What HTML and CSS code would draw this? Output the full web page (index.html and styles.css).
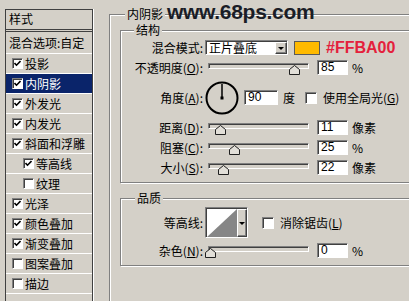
FILE: index.html
```html
<!DOCTYPE html>
<html lang="zh-CN">
<head>
<meta charset="UTF-8">
<title>图层样式 - 内阴影</title>
<link rel="stylesheet" href="styles.css">
</head>
<body>
<div class="watermark">www.68ps.com</div>

<div class="style-list">
	<div class="list-head">样式</div>
	<div class="list-item blend">混合选项:自定</div>
	<div class="list-item"><span class="check"><svg width="7" height="7" viewBox="0 0 7 7"><polyline points="0.5,3 2.5,5.2 6.5,1" fill="none" stroke="#000" stroke-width="1.6"/></svg></span>投影</div>
	<div class="list-item selected"><span class="check"><svg width="7" height="7" viewBox="0 0 7 7"><polyline points="0.5,3 2.5,5.2 6.5,1" fill="none" stroke="#000" stroke-width="1.6"/></svg></span>内阴影</div>
	<div class="list-item"><span class="check"><svg width="7" height="7" viewBox="0 0 7 7"><polyline points="0.5,3 2.5,5.2 6.5,1" fill="none" stroke="#000" stroke-width="1.6"/></svg></span>外发光</div>
	<div class="list-item"><span class="check"><svg width="7" height="7" viewBox="0 0 7 7"><polyline points="0.5,3 2.5,5.2 6.5,1" fill="none" stroke="#000" stroke-width="1.6"/></svg></span>内发光</div>
	<div class="list-item"><span class="check"><svg width="7" height="7" viewBox="0 0 7 7"><polyline points="0.5,3 2.5,5.2 6.5,1" fill="none" stroke="#000" stroke-width="1.6"/></svg></span>斜面和浮雕</div>
	<div class="list-item sub"><span class="check"><svg width="7" height="7" viewBox="0 0 7 7"><polyline points="0.5,3 2.5,5.2 6.5,1" fill="none" stroke="#000" stroke-width="1.6"/></svg></span>等高线</div>
	<div class="list-item sub"><span class="check"></span>纹理</div>
	<div class="list-item"><span class="check"><svg width="7" height="7" viewBox="0 0 7 7"><polyline points="0.5,3 2.5,5.2 6.5,1" fill="none" stroke="#000" stroke-width="1.6"/></svg></span>光泽</div>
	<div class="list-item"><span class="check"><svg width="7" height="7" viewBox="0 0 7 7"><polyline points="0.5,3 2.5,5.2 6.5,1" fill="none" stroke="#000" stroke-width="1.6"/></svg></span>颜色叠加</div>
	<div class="list-item"><span class="check"><svg width="7" height="7" viewBox="0 0 7 7"><polyline points="0.5,3 2.5,5.2 6.5,1" fill="none" stroke="#000" stroke-width="1.6"/></svg></span>渐变叠加</div>
	<div class="list-item"><span class="check"></span>图案叠加</div>
	<div class="list-item"><span class="check"></span>描边</div>
</div>

<fieldset class="group outer">
	<legend class="legend-main">内阴影</legend>

	<fieldset class="group inner">
		<legend class="legend-struct">结构</legend>
		<div class="rows">
			<div class="row">
				<span class="lbl">混合模式:</span>
				<div class="select">
					<span class="select-text">正片叠底</span>
					<span class="drop"><i class="arrow"></i></span>
				</div>
				<span class="swatch"></span>
				<span class="note">#FFBA00</span>
			</div>

			<div class="row">
				<span class="lbl">不透明度(<u>O</u>):</span>
				<div class="slider">
					<div class="track"></div>
					<span class="thumb" style="left: 84px"><svg width="11" height="10" viewBox="0 0 11 10"><polygon points="0.5,9.5 0.5,4.5 5.5,0.5 10.5,4.5 10.5,9.5" fill="#e2dfd8" stroke="#202020"/></svg></span>
				</div>
				<span class="num">85</span>
				<span class="unit">%</span>
			</div>

			<div class="row row-angle">
				<span class="lbl">角度(<u>A</u>):</span>
				<svg class="dial" width="34" height="34" viewBox="0 0 34 34">
					<circle cx="17" cy="17" r="15.5" fill="none" stroke="#000" stroke-width="2"/>
					<line x1="17" y1="17" x2="17" y2="3" stroke="#000" stroke-width="1.5"/>
					<rect x="15.5" y="15.5" width="3" height="3" fill="#000"/>
				</svg>
				<span class="num num-wide">90</span>
				<span class="deg">度</span>
				<span class="check big"></span>
				<span class="check-label">使用全局光(<u>G</u>)</span>
			</div>

			<div class="row">
				<span class="lbl">距离(<u>D</u>):</span>
				<div class="slider">
					<div class="track"></div>
					<span class="thumb" style="left: 10px"><svg width="11" height="10" viewBox="0 0 11 10"><polygon points="0.5,9.5 0.5,4.5 5.5,0.5 10.5,4.5 10.5,9.5" fill="#e2dfd8" stroke="#202020"/></svg></span>
				</div>
				<span class="num">11</span>
				<span class="unit">像素</span>
			</div>

			<div class="row">
				<span class="lbl">阻塞(<u>C</u>):</span>
				<div class="slider">
					<div class="track"></div>
					<span class="thumb" style="left: 24px"><svg width="11" height="10" viewBox="0 0 11 10"><polygon points="0.5,9.5 0.5,4.5 5.5,0.5 10.5,4.5 10.5,9.5" fill="#e2dfd8" stroke="#202020"/></svg></span>
				</div>
				<span class="num">25</span>
				<span class="unit">%</span>
			</div>

			<div class="row">
				<span class="lbl">大小(<u>S</u>):</span>
				<div class="slider">
					<div class="track"></div>
					<span class="thumb" style="left: 13px"><svg width="11" height="10" viewBox="0 0 11 10"><polygon points="0.5,9.5 0.5,4.5 5.5,0.5 10.5,4.5 10.5,9.5" fill="#e2dfd8" stroke="#202020"/></svg></span>
				</div>
				<span class="num">22</span>
				<span class="unit">像素</span>
			</div>
		</div>
	</fieldset>

	<fieldset class="group inner quality">
		<legend class="legend-quality">品质</legend>
		<div class="rows rows-quality">
			<div class="row row-contour">
				<span class="lbl">等高线:</span>
				<div class="contour">
					<svg class="contour-pic" width="31" height="29" viewBox="0 0 31 29" preserveAspectRatio="none">
						<rect width="31" height="29" fill="#fff"/>
						<polygon points="0,29 31,0 31,29" fill="#868686"/>
					</svg>
					<span class="drop contour-drop"><i class="arrow"></i></span>
				</div>
				<span class="check big antialias"></span>
				<span class="check-label">消除锯齿(<u>L</u>)</span>
			</div>

			<div class="row">
				<span class="lbl">杂色(<u>N</u>):</span>
				<div class="slider">
					<div class="track"></div>
					<span class="thumb" style="left: 0px"><svg width="11" height="10" viewBox="0 0 11 10"><polygon points="0.5,9.5 0.5,4.5 5.5,0.5 10.5,4.5 10.5,9.5" fill="#e2dfd8" stroke="#202020"/></svg></span>
				</div>
				<span class="num">0</span>
				<span class="unit">%</span>
			</div>
		</div>
	</fieldset>
</fieldset>
</body>
</html>
```

FILE: styles.css
```css
* {
	box-sizing: border-box;
}
body {
	margin: 0;
	width: 409px;
	height: 301px;
	overflow: hidden;
	position: relative;
	display: flex;
	align-items: flex-start;
	background: #d4d0c8;
	color: #000;
	font-family: "Noto Sans CJK SC", "Liberation Sans", sans-serif;
	font-size: 12px;
}
u {
	text-decoration-thickness: 1px;
	text-underline-offset: 1px;
}

/* watermark over the dialog */
.watermark {
	position: absolute;
	left: 167px;
	top: 0;
	z-index: 2;
	font-family: "Liberation Sans", Arial, sans-serif;
	font-weight: bold;
	font-size: 21px;
	line-height: 24px;
	letter-spacing: -0.3px;
	color: #1a1d26;
}

/* left list of styles */
.style-list {
	flex: none;
	width: 88px;
	height: 293px;
	margin: 9px 0 0 5px;
	border: 1px solid #404040;
	box-shadow: 1px 0 0 #fff;
}
.list-head {
	height: 22px;
	padding-left: 3px;
	line-height: 17px;
	border-bottom: 3px double #404040;
}
.list-item {
	display: flex;
	align-items: center;
	height: 20px;
	padding-left: 6px;
	border-bottom: 1px solid #fff;
	white-space: nowrap;
}
.list-item.blend {
	height: 22px;
	padding-left: 3px;
}
.list-item.sub {
	padding-left: 17px;
}
.list-item.selected {
	background: #0a246a;
	color: #fff;
}

/* checkboxes */
.check {
	flex: none;
	display: flex;
	align-items: center;
	justify-content: center;
	width: 11px;
	height: 11px;
	margin-right: 2px;
	background: #fff;
	border: 1px solid;
	border-color: #808080 #fff #fff #808080;
	box-shadow: inset 1px 1px 0 #404040;
}
.check.big {
	width: 12px;
	height: 12px;
	margin-left: 10px;
	margin-right: 0;
}
.check.antialias {
	margin-left: 14px;
}
.check-label {
	margin-left: 6px;
	white-space: nowrap;
}

/* group boxes */
.group {
	margin: 0;
	padding: 0;
	min-width: 0;
	border: 1px solid #808080;
	box-shadow: inset 1px 1px 0 #fff, 1px 1px 0 #fff;
}
.group legend {
	position: relative;
	padding: 0 2px;
	line-height: 14px;
	background: #d4d0c8;
}
.outer {
	flex: none;
	width: 320px;
	height: 295px;
	margin: 7px 0 0 16px;
	padding: 2px 0 0 10px;
}
.legend-main {
	margin-left: 5px;
}
.inner {
	width: 300px;
	padding: 0 0 7px 0;
}
.legend-struct {
	margin-left: 13px;
}
.quality {
	margin-top: 8px;
}
.legend-quality {
	margin-left: 14px;
}

/* rows */
.rows {
	display: flex;
	flex-direction: column;
	gap: 5px;
	padding-top: 3px;
}
.rows-quality {
	padding-top: 2px;
}
.row {
	display: flex;
	align-items: center;
	height: 15px;
	white-space: nowrap;
}
.row-angle {
	height: 35px;
}
.row-contour {
	height: 31px;
}
.lbl {
	flex: none;
	width: 82px;
	margin-right: 2px;
	text-align: right;
	line-height: 15px;
}

/* blend mode select */
.select {
	display: flex;
	width: 83px;
	height: 15px;
	background: #fff;
	border: 1px solid;
	border-color: #808080 #fff #fff #808080;
	box-shadow: inset 1px 1px 0 #404040;
}
.select-text {
	flex: 1;
	padding-left: 3px;
	line-height: 13px;
}
.drop {
	display: flex;
	align-items: center;
	justify-content: center;
	width: 12px;
	margin: 1px 0 0 0;
	background: #d4d0c8;
	border: 1px solid;
	border-color: #fff #404040 #404040 #fff;
	box-shadow: inset -1px -1px 0 #808080;
}
.arrow {
	width: 0;
	height: 0;
	border-left: 3px solid transparent;
	border-right: 3px solid transparent;
	border-top: 3px solid #000;
}
.swatch {
	width: 26px;
	height: 14px;
	margin-left: 6px;
	background: #ffba00;
	border: 1px solid #5a5a5a;
}
.note {
	margin-left: 6px;
	font-family: "Liberation Sans", Arial, sans-serif;
	font-weight: bold;
	font-size: 16px;
	line-height: 15px;
	color: #e4213c;
}

/* sliders */
.slider {
	position: relative;
	flex: none;
	width: 104px;
	height: 15px;
}
.track {
	height: 6px;
	margin: 3px 0 0 3px;
	background: #d4d0c8;
	border: 1px solid;
	border-color: #808080 #fff #fff #808080;
	box-shadow: inset 1px 1px 0 #404040;
}
.thumb {
	position: absolute;
	top: 5px;
	display: block;
	width: 11px;
	height: 10px;
}
.thumb svg {
	display: block;
}

/* number fields */
.num {
	flex: none;
	width: 31px;
	height: 15px;
	margin-left: 8px;
	padding-left: 3px;
	background: #fff;
	border: 1px solid;
	border-color: #808080 #fff #fff #808080;
	box-shadow: inset 1px 1px 0 #404040;
	font-family: "Liberation Sans", Arial, sans-serif;
	line-height: 13px;
}
.num-wide {
	width: 34px;
	margin-left: 5px;
}
.unit {
	margin-left: 4px;
}
.deg {
	margin-left: 5px;
}

/* angle dial */
.dial {
	flex: none;
	display: block;
}

/* contour picker */
.contour {
	display: flex;
	width: 43px;
	height: 31px;
	background: #fff;
	border: 1px solid;
	border-color: #808080 #fff #fff #808080;
	box-shadow: inset 1px 1px 0 #404040;
	padding: 1px 0 0 1px;
}
.contour-pic {
	display: block;
	flex: 1;
	height: 100%;
}
.contour-drop {
	width: 10px;
	margin: 0;
}
```
